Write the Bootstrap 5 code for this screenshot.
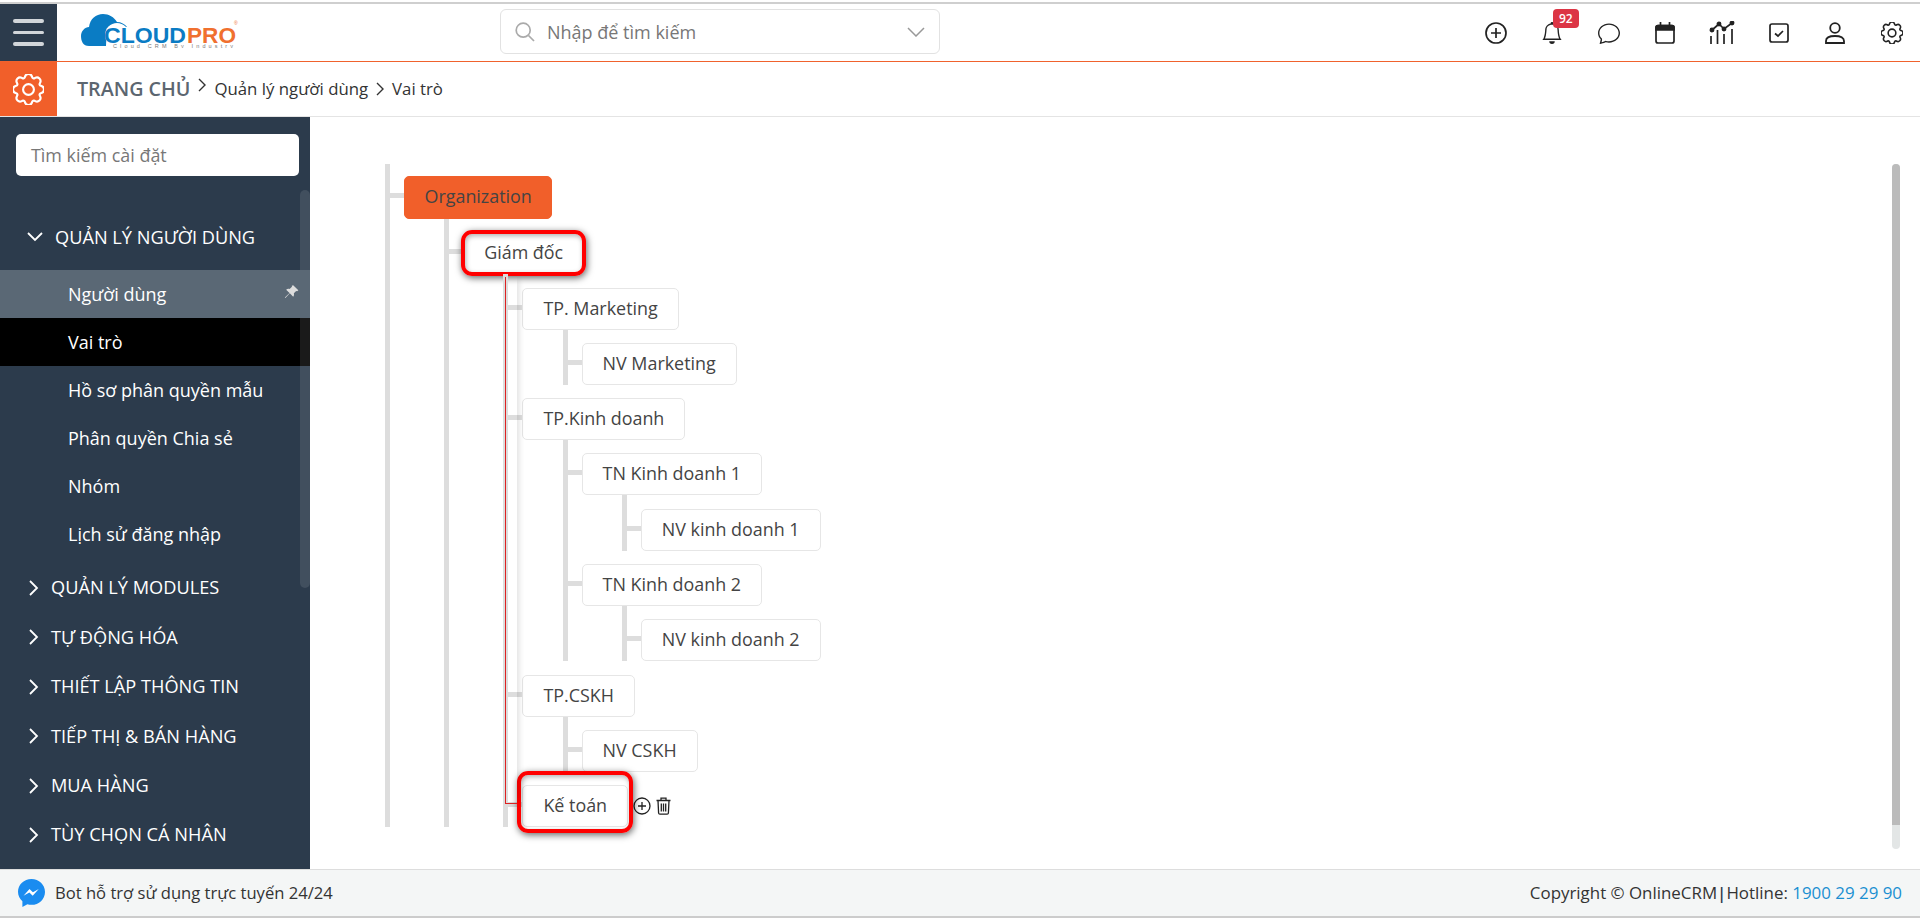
<!DOCTYPE html>
<html lang="vi">
<head>
  <meta charset="UTF-8">
  <meta name="viewport" content="width=device-width, initial-scale=1.0">
  <title>Vai trò</title>
  <link rel="stylesheet" href="https://cdn.jsdelivr.net/npm/bootstrap@5.3.0/dist/css/bootstrap.min.css">
  <style>
    html, body { height: 100%; overflow: hidden; }
    body { font-family: "Open Sans", "Noto Sans", sans-serif; font-size: 15px; color: #333; background: #fff; }
    .app-shell { height: 918px; padding-top: 2px; }
    .top-line { height: 2px; background: #cfcfcf; }
    .top-bar { height: 58px; border-bottom: 1px solid #f0622d; }
    .menu-btn { width: 57px; height: 57px; background: #2c3b4c; gap: 8px; }
    .menu-btn span { display: block; width: 31px; height: 3.5px; border-radius: 2px; background: #d2d6da; }
    .brand-logo { margin: 4px 0 0 24px; }
    .search-box { width: 440px; height: 45px; margin: 5px 0 0 259px; border: 1px solid #e2e2e2; border-radius: 6px; padding: 0 14px; color: #777; font-size: 18px; }
    .search-box span { padding-top: 1px; }
    .tool-btn { width: 56.6px; height: 57px; }
    .bell-badge { top: 5px; left: 29px; width: 26px; height: 19px; padding: 0; font-size: 12px; line-height: 19px; border-radius: 4px; font-weight: 600; }
    .crumb-bar { height: 55px; border-bottom: 1px solid #e4e4e4; }
    .gear-box { width: 57px; height: 54px; background: #f15f2a; }
    .crumb-home { margin-left: 20px; font-size: 19.7px; font-weight: 600; color: #5c6670; }
    .crumb-text { font-size: 16.8px; color: #333; }
    .main-row { height: 752px; }
    .side-panel { width: 310px; background: #2c3b4c; color: #fff; }
    .side-search { margin: 17px 11px 36px 16px; height: 42px; border-radius: 5px; background: #fff; color: #777; padding-left: 15px; font-size: 17.9px; }
    .side-scroll { position: absolute; top: 73px; right: 0; width: 10px; height: 398px; background: rgba(255,255,255,.1); border-radius: 5px; }
    .group-head { height: 49.4px; font-size: 18.2px; padding-left: 29px; gap: 12px; }
    .group-head.is-open { padding: 1px 0 0 27px; gap: 12px; margin-bottom: 8.5px; }
    .side-item { height: 48px; padding: 1px 0 0 68px; font-size: 18px; }
    .side-item.is-hover { background: #5a6875; }
    .side-item.is-active { background: #000; }
    .pin-icon { position: absolute; right: 11px; top: 14px; }
    .group-list { margin-top: 5.5px; }
    .tree-pane { padding: 47px 0 0 75px; }
    .org-tree, .org-tree ul { list-style: none; margin: 0; padding: 13.3px 0 0 14px; border-left: 5px solid #ddd; position: relative; }
    .org-tree { padding-top: 12px; width: max-content; }
    .org-tree ul { margin-left: 40.2px; }
    .org-tree li + li { margin-top: 13.3px; }
    .tree-node { position: relative; display: inline-block; height: 42px; line-height: 38px; padding: 0 20px; border: 1px solid #e6e6e6; border-radius: 5px; background: #fff; color: #444; font-size: 17.9px; vertical-align: top; }
    .tree-node::before { content: ""; position: absolute; left: -15px; top: 16px; width: 14px; height: 5px; background: #ddd; }
    .tree-node.is-root { background: #f15f2a; border-color: #f15f2a; height: 43px; line-height: 39px; padding: 0 19.5px; }
    .tree-row { height: 42px; }
    .red-ring { position: absolute; border: 4px solid #f00; border-radius: 11px; box-shadow: 1px 2px 7px rgba(0,0,0,.6), inset 1px 2px 5px rgba(0,0,0,.3); pointer-events: none; }
    .ring-director { inset: -3px -3px -3px -3px; }
    .ring-account { inset: -15px -6px -7px -6px; }
    .director-reports::after { content: ""; position: absolute; left: -3px; top: 3px; bottom: 23px; width: 12px; border-left: 1.5px solid #d22; border-bottom: 1.5px solid #d22; box-shadow: 5px 0 6px -4px rgba(0,0,0,.2); }
    .node-tools { margin-left: 5px; gap: 4px; height: 42px; }
    .v-scroll { position: absolute; top: 47px; right: 20px; width: 8px; height: 685px; background: #e3e6e6; border-radius: 4px; }
    .v-scroll div { height: 661px; background: #bbb; border-radius: 4px 4px 0 0; }
    .foot-bar { height: 49px; background: #f4f6f6; border-top: 1px solid #ddd; border-bottom: 2px solid #ccc; font-size: 16.9px; color: #333; padding: 0 18px; }
    .foot-note { margin-left: 10px; font-size: 16.6px; }
    .foot-sep { color: #2c3b4c; font-weight: 600; }
    .hotline { color: #1a8fd1; }
  </style>
</head>
<body>
<div class="app-shell">
  <div class="top-line"></div>

  <header class="top-bar d-flex align-items-start">
    <div class="menu-btn d-flex flex-column align-items-center justify-content-center">
      <span></span><span></span><span></span>
    </div>
    <div class="brand-logo">
      <svg width="160" height="40" viewBox="0 0 160 40">
        <path d="M8 38C2 38 0 33 0 28c0-5 4-9 8-9 1-8 7-13 14-13 6 0 11 3 14 8 4 0 8 2 10 5h-8c-9 1-13 9-13 19z" fill="#0a7cc4"/>
        <circle cx="36" cy="27" r="12" fill="#fff"/>
        <text x="23" y="35" font-family="Liberation Sans, sans-serif" font-weight="700" font-size="22.5" fill="#0a7cc4" textLength="82" lengthAdjust="spacingAndGlyphs">CLOUD</text>
        <text x="106" y="35" font-family="Liberation Sans, sans-serif" font-weight="700" font-size="22.5" fill="#f0702f" textLength="49" lengthAdjust="spacingAndGlyphs">PRO</text>
        <text x="32" y="39.5" font-family="Liberation Sans, sans-serif" font-size="5.5" fill="#777" textLength="120">Cloud CRM By Industry</text>
        <text x="153" y="17" font-family="Liberation Sans, sans-serif" font-size="5" fill="#f0702f">®</text>
      </svg>
    </div>
    <div class="search-box d-flex align-items-center">
      <svg width="20" height="20" viewBox="0 0 20 20" fill="none" stroke="#aaa" stroke-width="1.7"><circle cx="8.2" cy="8.2" r="7"/><path d="M13.5 13.5l5.5 5.5"/></svg>
      <span class="ms-2 ps-1 flex-grow-1">Nhập để tìm kiếm</span>
      <svg width="18" height="10" viewBox="0 0 18 10" fill="none" stroke="#999" stroke-width="1.5"><path d="M1 1l8 8 8-8"/></svg>
    </div>
    <div class="ms-auto d-flex">
      <div class="tool-btn d-flex align-items-center justify-content-center">
        <svg width="22" height="22" viewBox="0 0 22 22" fill="none" stroke="#222" stroke-width="1.7"><circle cx="11" cy="11" r="10"/><path d="M11 6v10M6 11h10"/></svg>
      </div>
      <div class="tool-btn position-relative d-flex align-items-center justify-content-center">
        <svg width="22" height="22" viewBox="0 0 16 16" fill="#222"><path d="M8 16a2 2 0 0 0 2-2H6a2 2 0 0 0 2 2zM8 1.918l-.797.161A4.002 4.002 0 0 0 4 6c0 .628-.134 2.197-.459 3.742-.16.767-.376 1.566-.663 2.258h10.244c-.287-.692-.502-1.49-.663-2.258C12.134 8.197 12 6.628 12 6a4.002 4.002 0 0 0-3.203-3.92L8 1.917zM14.22 12c.223.447.481.801.78 1H1c.299-.199.557-.553.78-1C2.68 10.2 3 6.88 3 6c0-2.42 1.72-4.44 4.005-4.901a1 1 0 1 1 1.99 0A5.002 5.002 0 0 1 13 6c0 .88.32 4.2 1.22 6z"/></svg>
        <span class="badge text-bg-danger position-absolute bell-badge">92</span>
      </div>
      <div class="tool-btn d-flex align-items-center justify-content-center">
        <svg width="22" height="22" viewBox="0 0 16 16" fill="#222"><path d="M2.678 11.894a1 1 0 0 1 .287.801 10.97 10.97 0 0 1-.398 2c1.395-.323 2.247-.697 2.634-.893a1 1 0 0 1 .71-.074A8.06 8.06 0 0 0 8 14c3.996 0 7-2.807 7-6 0-3.192-3.004-6-7-6S1 4.808 1 8c0 1.468.617 2.83 1.678 3.894zm-.493 3.905a21.682 21.682 0 0 1-.713.129c-.2.032-.352-.176-.273-.362a9.68 9.68 0 0 0 .244-.637l.003-.01c.248-.72.45-1.548.524-2.319C.743 11.37 0 9.76 0 8c0-3.866 3.582-7 8-7s8 3.134 8 7-3.582 7-8 7a9.06 9.06 0 0 1-2.347-.306c-.52.263-1.639.742-3.468 1.105z"/></svg>
      </div>
      <div class="tool-btn d-flex align-items-center justify-content-center">
        <svg width="20" height="22" viewBox="0 0 20 22" fill="none" stroke="#222" stroke-width="1.7"><rect x="1" y="3.5" width="18" height="17.5" rx="2"/><path d="M1 5.5a2 2 0 0 1 2-2h14a2 2 0 0 1 2 2V8H1z" fill="#222"/><path d="M5.5 0v4M14.5 0v4"/></svg>
      </div>
      <div class="tool-btn d-flex align-items-center justify-content-center">
        <svg width="26" height="24" viewBox="0 0 26 24" fill="none" stroke="#222" stroke-width="1.7"><path d="M3 9l7-6 5 5 8-6"/><circle cx="3" cy="9" r="1.6" fill="#222"/><circle cx="10" cy="3" r="1.6" fill="#222"/><circle cx="15" cy="8" r="1.6" fill="#222"/><circle cx="23" cy="2" r="1.6" fill="#222"/><path d="M2 15v8M8.500 9v14M15 13v10M23 8v15"/></svg>
      </div>
      <div class="tool-btn d-flex align-items-center justify-content-center">
        <svg width="20" height="20" viewBox="0 0 20 20" fill="none" stroke="#222" stroke-width="1.7"><rect x="1" y="1" width="18" height="18" rx="2"/><path d="M6 10.500l3 2.500 5-5"/></svg>
      </div>
      <div class="tool-btn d-flex align-items-center justify-content-center">
        <svg width="20" height="22" viewBox="0 0 20 22" fill="none" stroke="#222" stroke-width="1.8"><circle cx="10" cy="6" r="4.8"/><path d="M1 21v-2c0-3 3-5 9-5s9 2 9 5v2z"/></svg>
      </div>
      <div class="tool-btn d-flex align-items-center justify-content-center">
        <svg width="22" height="22" viewBox="0 0 16 16" fill="none" stroke="#222" stroke-width="1.150"><circle cx="8" cy="8" r="2.800"/><path d="M9.796 1.343c-.527-1.79-3.065-1.79-3.592 0l-.094.319a.873.873 0 0 1-1.255.52l-.292-.16c-1.64-.892-3.433.902-2.54 2.541l.159.292a.873.873 0 0 1-.52 1.255l-.319.094c-1.79.527-1.79 3.065 0 3.592l.319.094a.873.873 0 0 1 .52 1.255l-.16.292c-.892 1.64.901 3.434 2.541 2.54l.292-.159a.873.873 0 0 1 1.255.52l.094.319c.527 1.79 3.065 1.79 3.592 0l.094-.319a.873.873 0 0 1 1.255-.52l.292.16c1.64.893 3.434-.902 2.54-2.541l-.159-.292a.873.873 0 0 1 .52-1.255l.319-.094c1.79-.527 1.79-3.065 0-3.592l-.319-.094a.873.873 0 0 1-.52-1.255l.16-.292c.893-1.64-.902-3.433-2.541-2.54l-.292.159a.873.873 0 0 1-1.255-.52l-.094-.319z"/></svg>
      </div>
    </div>
  </header>

  <div class="crumb-bar d-flex align-items-center">
    <div class="gear-box d-flex align-items-center justify-content-center">
      <svg width="31" height="31" viewBox="0 0 16 16" fill="none" stroke="#fff" stroke-width="1.1"><circle cx="8" cy="8" r="2.800"/><path d="M9.796 1.343c-.527-1.79-3.065-1.79-3.592 0l-.094.319a.873.873 0 0 1-1.255.52l-.292-.16c-1.64-.892-3.433.902-2.54 2.541l.159.292a.873.873 0 0 1-.52 1.255l-.319.094c-1.79.527-1.79 3.065 0 3.592l.319.094a.873.873 0 0 1 .52 1.255l-.16.292c-.892 1.64.901 3.434 2.541 2.54l.292-.159a.873.873 0 0 1 1.255.52l.094.319c.527 1.79 3.065 1.79 3.592 0l.094-.319a.873.873 0 0 1 1.255-.52l.292.16c1.64.893 3.434-.902 2.54-2.541l-.159-.292a.873.873 0 0 1 .52-1.255l.319-.094c1.79-.527 1.79-3.065 0-3.592l-.319-.094a.873.873 0 0 1-.52-1.255l.16-.292c.893-1.64-.902-3.433-2.541-2.54l-.292.159a.873.873 0 0 1-1.255-.52l-.094-.319z"/></svg>
    </div>
    <span class="crumb-home">TRANG CHỦ</span>
    <svg class="mx-2 mb-2" width="8" height="14" viewBox="0 0 8 14" fill="none" stroke="#333" stroke-width="1.400"><path d="M1 1l6 6-6 6"/></svg>
    <span class="crumb-text">Quản lý người dùng</span>
    <svg class="mx-2" width="8" height="14" viewBox="0 0 8 14" fill="none" stroke="#333" stroke-width="1.400"><path d="M1 1l6 6-6 6"/></svg>
    <span class="crumb-text">Vai trò</span>
  </div>

  <div class="main-row d-flex">
    <aside class="side-panel position-relative flex-shrink-0">
      <div class="side-search d-flex align-items-center">Tìm kiếm cài đặt</div>
      <div class="side-scroll"></div>
      <div class="group-head is-open d-flex align-items-center">
        <svg width="16" height="10" viewBox="0 0 16 10" fill="none" stroke="#fff" stroke-width="1.800"><path d="M1 1l7 7 7-7"/></svg>
        <span>QUẢN LÝ NGƯỜI DÙNG</span>
      </div>
      <ul class="list-unstyled mb-0">
        <li class="side-item is-hover position-relative d-flex align-items-center">Người dùng
          <svg class="pin-icon" width="15" height="16" viewBox="0 0 16 16" fill="#ddd"><path d="M9.800.700l5.500 5.500-1.300 1-1-.400-2.500 2.500c.4 1.500.1 2.800-.7 3.700L6.200 9.400 1.500 14.500.9 13.900l5-4.800L2.300 5.500c.9-.8 2.200-1.100 3.700-.7l2.500-2.500-.2-1z"/></svg>
        </li>
        <li class="side-item is-active d-flex align-items-center">Vai trò</li>
        <li class="side-item d-flex align-items-center">Hồ sơ phân quyền mẫu</li>
        <li class="side-item d-flex align-items-center">Phân quyền Chia sẻ</li>
        <li class="side-item d-flex align-items-center">Nhóm</li>
        <li class="side-item d-flex align-items-center">Lịch sử đăng nhập</li>
      </ul>
      <div class="group-list">
        <div class="group-head d-flex align-items-center"><svg width="10" height="16" viewBox="0 0 10 16" fill="none" stroke="#fff" stroke-width="1.800"><path d="M1 1l7 7-7 7"/></svg><span>QUẢN LÝ MODULES</span></div>
        <div class="group-head d-flex align-items-center"><svg width="10" height="16" viewBox="0 0 10 16" fill="none" stroke="#fff" stroke-width="1.800"><path d="M1 1l7 7-7 7"/></svg><span>TỰ ĐỘNG HÓA</span></div>
        <div class="group-head d-flex align-items-center"><svg width="10" height="16" viewBox="0 0 10 16" fill="none" stroke="#fff" stroke-width="1.800"><path d="M1 1l7 7-7 7"/></svg><span>THIẾT LẬP THÔNG TIN</span></div>
        <div class="group-head d-flex align-items-center"><svg width="10" height="16" viewBox="0 0 10 16" fill="none" stroke="#fff" stroke-width="1.800"><path d="M1 1l7 7-7 7"/></svg><span>TIẾP THỊ &amp; BÁN HÀNG</span></div>
        <div class="group-head d-flex align-items-center"><svg width="10" height="16" viewBox="0 0 10 16" fill="none" stroke="#fff" stroke-width="1.800"><path d="M1 1l7 7-7 7"/></svg><span>MUA HÀNG</span></div>
        <div class="group-head d-flex align-items-center"><svg width="10" height="16" viewBox="0 0 10 16" fill="none" stroke="#fff" stroke-width="1.800"><path d="M1 1l7 7-7 7"/></svg><span>TÙY CHỌN CÁ NHÂN</span></div>
      </div>
    </aside>

    <main class="tree-pane position-relative flex-grow-1">
      <ul class="org-tree">
        <li>
          <div class="tree-node is-root">Organization</div>
          <ul>
            <li>
              <div class="tree-node">Giám đốc<span class="red-ring ring-director"></span></div>
              <ul class="director-reports">
                <li>
                  <div class="tree-node">TP. Marketing</div>
                  <ul>
                    <li><div class="tree-node">NV Marketing</div></li>
                  </ul>
                </li>
                <li>
                  <div class="tree-node">TP.Kinh doanh</div>
                  <ul>
                    <li>
                      <div class="tree-node">TN Kinh doanh 1</div>
                      <ul><li><div class="tree-node">NV kinh doanh 1</div></li></ul>
                    </li>
                    <li>
                      <div class="tree-node">TN Kinh doanh 2</div>
                      <ul><li><div class="tree-node">NV kinh doanh 2</div></li></ul>
                    </li>
                  </ul>
                </li>
                <li>
                  <div class="tree-node">TP.CSKH</div>
                  <ul>
                    <li><div class="tree-node">NV CSKH</div></li>
                  </ul>
                </li>
                <li class="tree-row d-flex">
                  <div class="tree-node">Kế toán<span class="red-ring ring-account"></span></div>
                  <div class="node-tools d-flex align-items-center">
                    <svg width="18" height="18" viewBox="0 0 18 18" fill="none" stroke="#222" stroke-width="1.300"><circle cx="9" cy="9" r="8"/><path d="M9 5v8M5 9h8"/></svg>
                    <svg width="17" height="18" viewBox="0 0 16 18" fill="none" stroke="#222" stroke-width="1.300"><path d="M1 3.500h14M5.500 3.500V1.200h5v2.300M2.500 3.500l.6 12.500a1.300 1.300 0 0 0 1.300 1.200h7.200a1.300 1.300 0 0 0 1.300-1.200l.6-12.500M5.800 6.500v8M8 6.500v8M10.200 6.500v8"/></svg>
                  </div>
                </li>
              </ul>
            </li>
          </ul>
        </li>
      </ul>
      <div class="v-scroll"><div></div></div>
    </main>
  </div>

  <footer class="foot-bar d-flex align-items-center justify-content-between">
    <div class="d-flex align-items-center">
      <svg width="27" height="28" viewBox="0 0 27 28"><path d="M13.500 0C6 0 0 5.600 0 12.800c0 3.800 1.700 7.100 4.400 9.400V28l5-2.800c1.300.4 2.700.6 4.100.6 7.500 0 13.500-5.700 13.500-12.900S21 0 13.500 0z" fill="#1a8cf0"/><path d="M5.500 16.800l6-6.800 3.400 3.300 5.900-3.300-6.100 6.800-3.300-3.400z" fill="#fff"/></svg>
      <span class="foot-note">Bot hỗ trợ sử dụng trực tuyến 24/24</span>
    </div>
    <div>Copyright © OnlineCRM<span class="foot-sep">|</span>Hotline: <span class="hotline">1900 29 29 90</span></div>
  </footer>
</div>
<script src="https://cdn.jsdelivr.net/npm/bootstrap@5.3.0/dist/js/bootstrap.bundle.min.js"></script>
</body>
</html>
